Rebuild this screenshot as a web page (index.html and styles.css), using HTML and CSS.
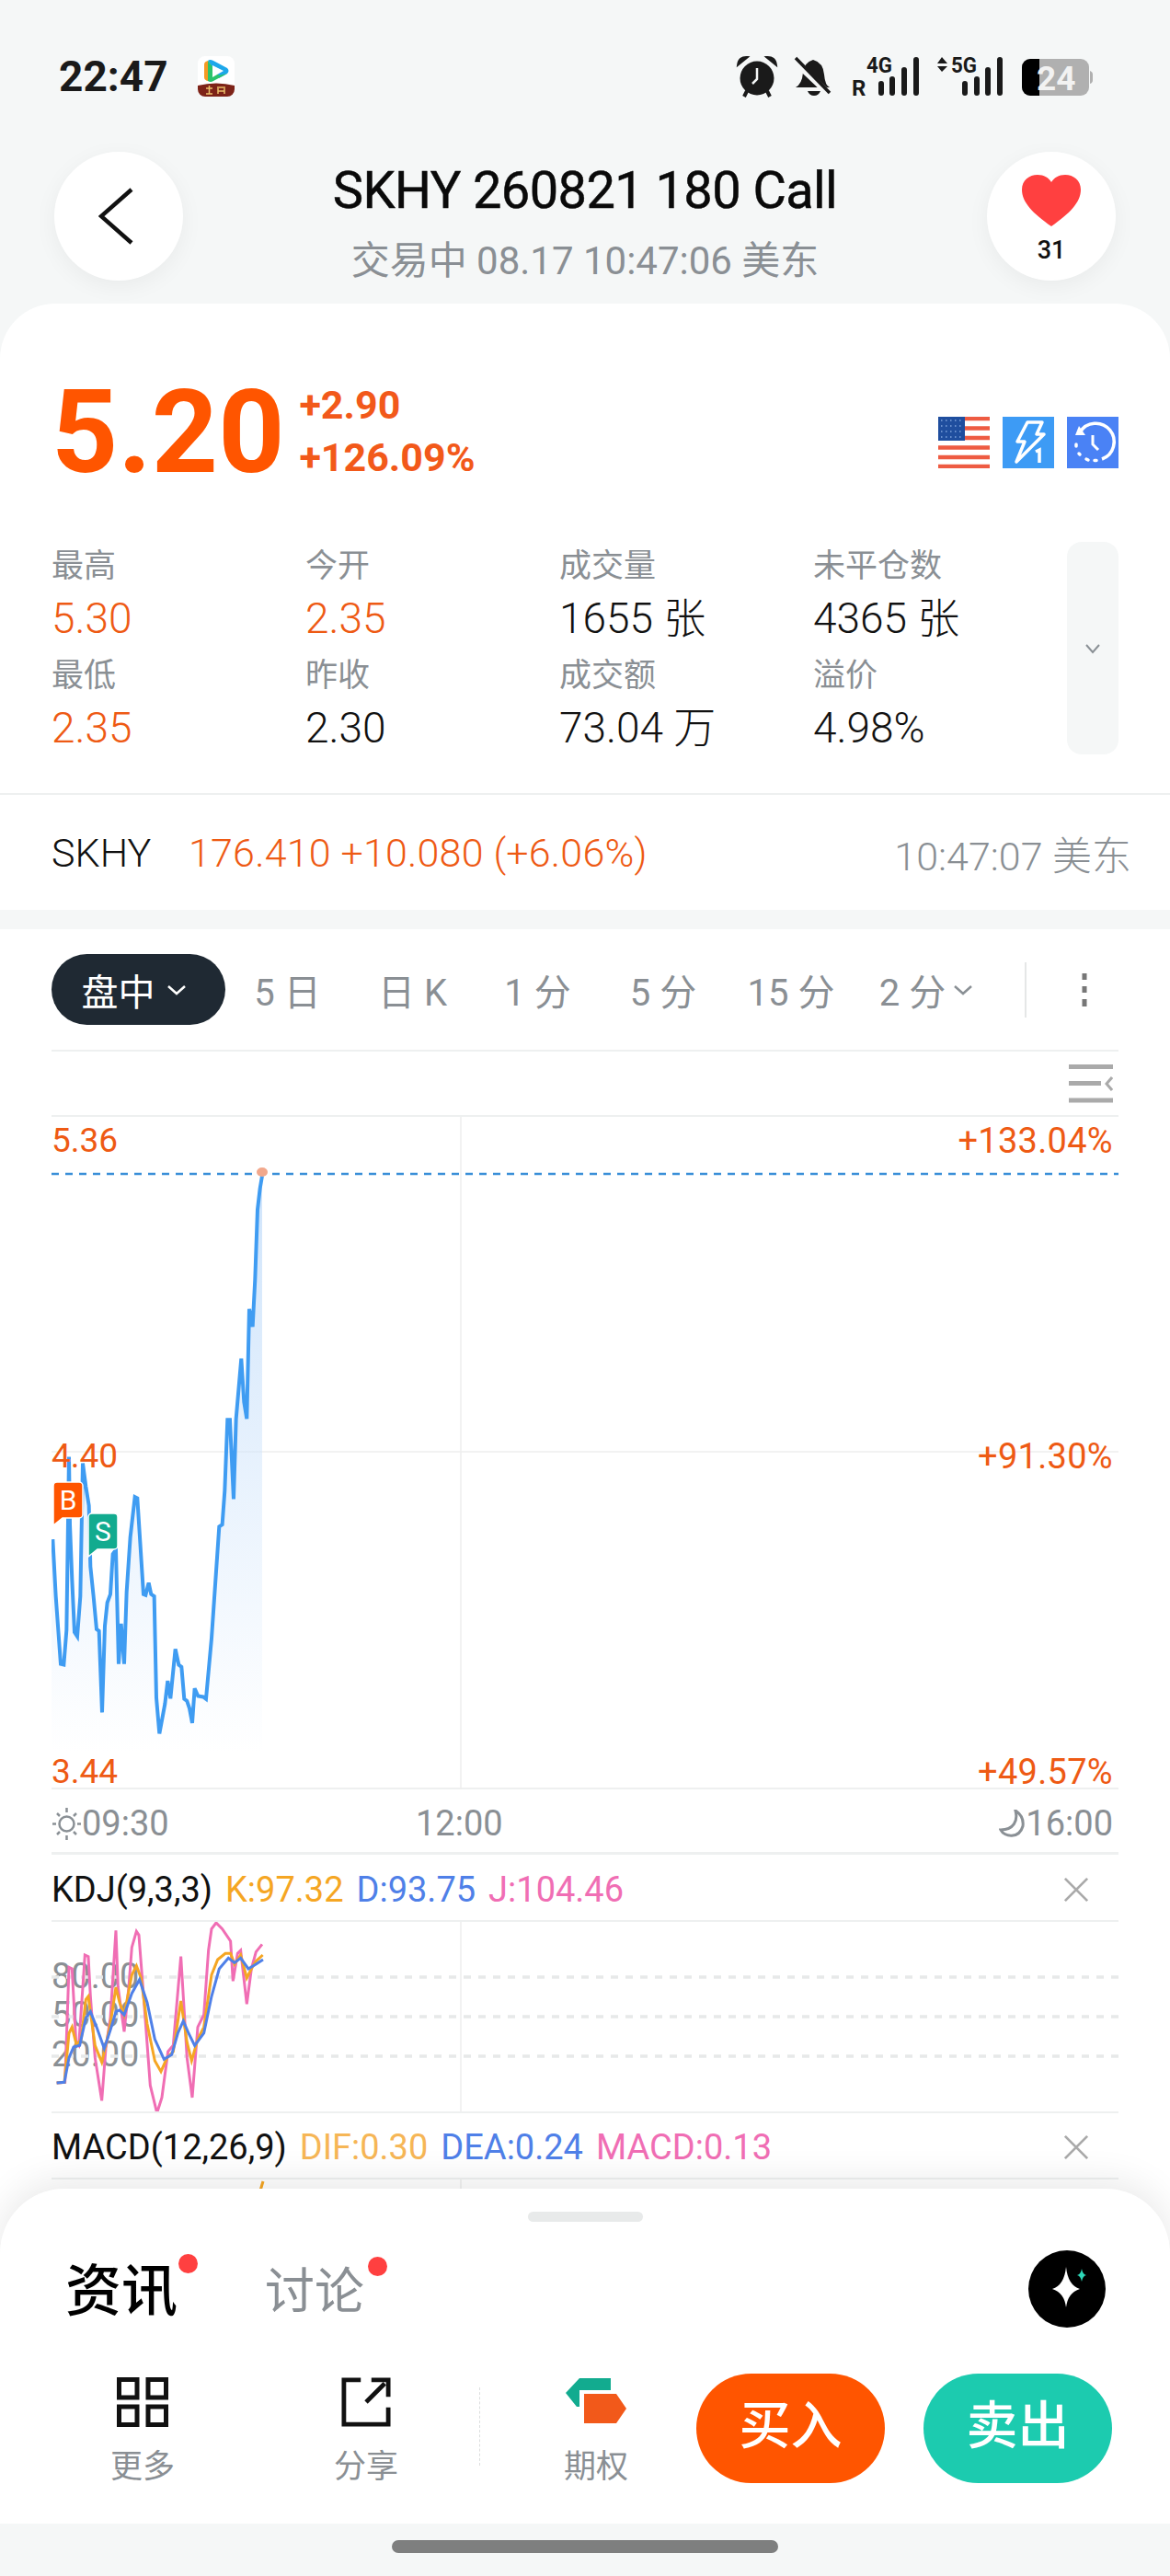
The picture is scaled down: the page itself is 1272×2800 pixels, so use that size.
FILE: index.html
```html
<!DOCTYPE html>
<html lang="zh-CN">
<head>
  <meta charset="UTF-8"/>
  <meta name="viewport" content="width=device-width,initial-scale=1"/>
  <title>SKHY 260821 180 Call</title>
  <link rel="stylesheet" href="styles.css">
</head>
<body>
<div id="page">

  <div class="status">
    <span class="clock">22:47</span>
    <svg class="app-icon" viewBox="0 0 42 46">
      <rect x="1" y="1" width="40" height="44" rx="8" fill="#fff"/>
      <path d="M12 6 Q8 7 8 10 V24 Q8 27 12 28 Z" fill="#f59a23"/>
      <path d="M12 6 Q14 4 18 6 L33 14 Q36 17 33 20 L24 25 Z" fill="#1ea7ea"/>
      <path d="M12 6 V28 Q15 30 18 28 L33 20 L24 22 L12 6 Z" fill="#2bc46b"/>
      <path d="M17 11 L29 17 L17 24 Z" fill="#fff"/>
      <path d="M1 33 Q21 28 41 33 V37 a8 8 0 0 1 -8 8 H9 a8 8 0 0 1 -8 -8 Z" fill="#7d2318"/>
      <path d="M10 36 H17 M13.500 33 V42 M10 42 H17 M22 35 H31 M23 42 V36 M30 42 V36 M23 39 H30" stroke="#ecc06a" stroke-width="1.500"/>
    </svg>
    <svg class="status-icons" viewBox="790 50 410 64">
      <!-- alarm -->
      <circle cx="823" cy="84" r="18.500" fill="#1a1a1a"/>
      <path d="M802 70 Q803 60 813 61 Z M844 70 Q843 60 833 61 Z" fill="#1a1a1a" stroke="#1a1a1a" stroke-width="2"/>
      <path d="M809 104 L812 98 M837 104 L834 98" stroke="#1a1a1a" stroke-width="4"/>
      <path d="M823 73 V85 L818 90" fill="none" stroke="#f5f7f7" stroke-width="2.500"/>
      <!-- muted bell -->
      <path d="M865 94 Q872 90 873 78 Q874 67 884 64 Q895 67 896 80 Q897 92 902 94 Z" fill="#1a1a1a"/>
      <path d="M878 98 H892 Q890 103 885 103 Q880 103 878 98 Z" fill="#1a1a1a"/>
      <path d="M860 62 L900 100" stroke="#f5f7f7" stroke-width="7"/>
      <path d="M865 62 L902 100" stroke="#1a1a1a" stroke-width="3.500"/>
      <!-- 4G -->
      <text class="net" x="926" y="103" font-size="24">R</text>
      <text class="net" x="942" y="78" font-size="23" textLength="28" lengthAdjust="spacingAndGlyphs">4G</text>
      <path d="M958 90 V100 M970 85 V100 M983 75 V100 M996 64 V100" stroke="#1a1a1a" stroke-width="6" stroke-linecap="round"/>
      <!-- 5G -->
      <path d="M1019 68 L1024 61 L1030 68 Z M1019 71 L1024 77 L1030 71 Z" fill="#1a1a1a"/>
      <text class="net" x="1034" y="78" font-size="23" textLength="28" lengthAdjust="spacingAndGlyphs">5G</text>
      <path d="M1049 90 V100 M1062 85 V100 M1074 75 V100 M1087 64 V100" stroke="#1a1a1a" stroke-width="6" stroke-linecap="round"/>
      <!-- battery -->
      <rect x="1111" y="63" width="73" height="40" rx="9" fill="#b0b0b0"/>
      <path d="M1120 63 H1130 V103 H1120 a9 9 0 0 1 -9 -9 V72 a9 9 0 0 1 9 -9 Z" fill="#000"/>
      <path d="M1185 76 q3 1 3 4 v6 q0 3 -3 4 Z" fill="#b0b0b0"/>
      <text class="net batt" x="1127" y="97" font-size="37">24</text>
    </svg>
  </div>

  <div class="topbar">
    <div class="round-btn">
      <svg class="back" viewBox="0 0 38 62"><path d="M36 2 L3 31 L36 60" fill="none" stroke="#111" stroke-width="4.500"/></svg>
    </div>
    <div class="title-box">
      <div class="title">SKHY 260821 180 Call</div>
      <div class="subtitle">交易中 08.17 10:47:06 美东</div>
    </div>
    <div class="round-btn fav">
      <svg class="heart" viewBox="0 0 64 56"><path d="M32 56 C12 42 0 30 0 16 C0 6 8 0 17 0 C24 0 29 3 32 8 C35 3 40 0 47 0 C56 0 64 6 64 16 C64 30 52 42 32 56 Z" fill="#ff4040"/></svg>
      <span class="fav-count">31</span>
    </div>
  </div>

  <div class="quote">
    <div class="quote-head">
      <div class="price">5.20</div>
      <div class="change">
        <div>+2.90</div>
        <div>+126.09%</div>
      </div>
      <div class="badges">
        <svg viewBox="0 0 56 56">
          <rect width="56" height="56" fill="#fff"/>
          <path d="M0 2 H56 M0 12.500 H56 M0 23 H56 M0 33.500 H56 M0 44 H56 M0 54 H56" stroke="#ee5b42" stroke-width="4.500"/>
          <rect width="29" height="26" fill="#1f4e9e"/>
          <path d="M3 4 H27 M3 10 H27 M3 16 H27 M3 22 H27" stroke="#7fa4dd" stroke-width="1.500" stroke-dasharray="1.500 3.500"/>
        </svg>
        <svg viewBox="0 0 56 56">
          <rect width="56" height="56" fill="#3d9bf5"/>
          <path d="M27 6 H43 L37 19 H45 L15 49 L24 27 H16 Z" fill="none" stroke="#fff" stroke-width="3.500" stroke-linejoin="round"/>
          <path d="M36 38 L40 36 V50" fill="none" stroke="#fff" stroke-width="3.500"/>
        </svg>
        <svg viewBox="0 0 56 56">
          <rect width="56" height="56" fill="#4a82f5"/>
          <path d="M14 17 A20 20 0 1 1 38 46" fill="none" stroke="#fff" stroke-width="3.500"/>
          <path d="M9 20 L20 20 L13 10 Z" fill="#fff"/>
          <path d="M28 20 V30 L34 36" fill="none" stroke="#fff" stroke-width="3"/>
          <path d="M10 30 V32 M13 40 L14 41 M21 46 L23 47 M30 47.500 L32 47.500" stroke="#fff" stroke-width="3.500" stroke-linecap="round"/>
        </svg>
      </div>
    </div>

    <div class="stats">
      <div class="stat-grid">
        <div class="stat"><span class="label">最高</span><span class="up">5.30</span></div>
        <div class="stat"><span class="label">今开</span><span class="up">2.35</span></div>
        <div class="stat"><span class="label">成交量</span><span>1655 张</span></div>
        <div class="stat"><span class="label">未平仓数</span><span>4365 张</span></div>
        <div class="stat"><span class="label">最低</span><span class="up">2.35</span></div>
        <div class="stat"><span class="label">昨收</span><span>2.30</span></div>
        <div class="stat"><span class="label">成交额</span><span>73.04 万</span></div>
        <div class="stat"><span class="label">溢价</span><span>4.98%</span></div>
      </div>
      <div class="expand">
        <svg viewBox="0 0 18 12"><path d="M2 2 L9 10 L16 2" fill="none" stroke="#8a9095" stroke-width="2"/></svg>
      </div>
    </div>

    <div class="underlying">
      <span class="sym">SKHY</span>
      <span class="under-px">176.410 +10.080 (+6.06%)</span>
      <span class="under-time">10:47:07 美东</span>
    </div>
  </div>

  <div class="chart-card">
    <div class="tabs">
      <div class="tab active">盘中<svg viewBox="0 0 22 12"><path d="M2 2 L11 10 L20 2" fill="none" stroke="#fff" stroke-width="2.500"/></svg></div>
      <div class="tab">5 日</div>
      <div class="tab">日 K</div>
      <div class="tab">1 分</div>
      <div class="tab">5 分</div>
      <div class="tab">15 分</div>
      <div class="tab">2 分<svg viewBox="0 0 22 12"><path d="M2 2 L11 10 L20 2" fill="none" stroke="#8a9095" stroke-width="2.500"/></svg></div>
      <div class="tab-sep"></div>
      <svg class="tab-more" viewBox="0 0 8 36"><path d="M4 0 V7 M4 14 V21 M4 28 V36" stroke="#777" stroke-width="5"/></svg>
    </div>

    <div class="chart-tools">
      <svg viewBox="0 0 48 42"><path d="M0 2.500 H48 M0 20.500 H35 M0 39 H48" stroke="#aaa" stroke-width="5"/><path d="M47 14 L41 21 L47 28" fill="none" stroke="#aaa" stroke-width="3"/></svg>
    </div>

    <div class="main-chart">
      <svg viewBox="56 1214 1160 731">
        <defs>
          <linearGradient id="area" x1="0" y1="0" x2="0" y2="1">
            <stop offset="0" stop-color="#cfe4fb"/>
            <stop offset="1" stop-color="#cfe4fb" stop-opacity="0"/>
          </linearGradient>
        </defs>
        <path d="M501 1214 V1945" stroke="#eee" stroke-width="1.500"/>
        <path d="M56 1578 H1216" stroke="#eee" stroke-width="1.500"/>
        <g transform="translate(20 1230) scale(.3333 .4592)">
          <polygon fill="url(#area)" points="112,965 122,1100 138,1260 148,1262 157,1180 165,770 168,930 175,1060 183,1185 192,1195 202,1100 210,785 220,840 230,885 235,1030 245,1100 255,1178 263,1182 273,1375 282,1170 290,1115 300,1095 308,1000 318,990 327,1260 335,1165 345,1260 353,1090 365,960 380,865 388,868 408,1095 415,1097 425,1068 433,1095 443,1100 450,1340 460,1425 478,1355 487,1300 496,1342 512,1225 523,1262 532,1267 541,1343 550,1348 558,1365 567,1400 575,1318 586,1336 603,1338 612,1343 630,1200 655,935 665,930 673,850 682,682 690,682 702,870 710,680 727,537 736,640 745,680 753,420 764,462 772,350 780,185 788,135 795,105 795,1470 108,1470 108,965"/>
          <polyline fill="none" stroke="#3f9cf2" stroke-width="4" vector-effect="non-scaling-stroke" points="112,965 122,1100 138,1260 148,1262 157,1180 165,770 168,930 175,1060 183,1185 192,1195 202,1100 210,785 220,840 230,885 235,1030 245,1100 255,1178 263,1182 273,1375 282,1170 290,1115 300,1095 308,1000 318,990 327,1260 335,1165 345,1260 353,1090 365,960 380,865 388,868 408,1095 415,1097 425,1068 433,1095 443,1100 450,1340 460,1425 478,1355 487,1300 496,1342 512,1225 523,1262 532,1267 541,1343 550,1348 558,1365 567,1400 575,1318 586,1336 603,1338 612,1343 630,1200 655,935 665,930 673,850 682,682 690,682 702,870 710,680 727,537 736,640 745,680 753,420 764,462 772,350 780,185 788,135 795,105"/>
        </g>
        <path d="M56 1276 H1216" stroke="#3a8fd8" stroke-width="2.500" stroke-dasharray="8 7"/>
        <ellipse cx="285" cy="1274" rx="6" ry="5" fill="#f2a88c"/>
        <path d="M62 1611 H86 a4 4 0 0 1 4 4 V1646 a4 4 0 0 1 -4 4 H68 L58 1658 V1615 a4 4 0 0 1 4 -4 Z" fill="#ff5500" stroke="#fff" stroke-width="1.500"/>
        <text class="flag-text" x="74" y="1641">B</text>
        <path d="M100 1645 H124 a4 4 0 0 1 4 4 V1680 a4 4 0 0 1 -4 4 H106 L96 1692 V1649 a4 4 0 0 1 4 -4 Z" fill="#12ab8f" stroke="#fff" stroke-width="1.500"/>
        <text class="flag-text" x="112" y="1675">S</text>
      </svg>
      <span class="axis-l l1">5.36</span>
      <span class="axis-l l2">4.40</span>
      <span class="axis-l l3">3.44</span>
      <span class="axis-r l1">+133.04%</span>
      <span class="axis-r l2">+91.30%</span>
      <span class="axis-r l3">+49.57%</span>
    </div>

    <div class="time-axis">
      <span class="t-start">
        <svg viewBox="0 0 31 35"><circle cx="15.500" cy="17.500" r="8" fill="none" stroke="#8a9095" stroke-width="2.500"/><path d="M15.500 0 V5 M15.500 30 V35 M0 17.500 H4 M27 17.500 H31 M5 6 L8 9 M26 6 L23 9 M5 29 L8 26 M26 29 L23 26" stroke="#8a9095" stroke-width="2.500"/></svg>09:30
      </span>
      <span class="t-mid">12:00</span>
      <span class="t-end">
        <svg viewBox="0 0 28 30"><path d="M18 1 C21 12 16 22 2 22 C6 30 22 32 26 18 C27 11 24 5 18 1 Z" fill="none" stroke="#8a9095" stroke-width="3"/></svg>16:00
      </span>
    </div>

    <div class="ind-head">
      <span class="ind-name">KDJ(9,3,3)</span>
      <span class="c-k">K:97.32</span>
      <span class="c-d">D:93.75</span>
      <span class="c-j">J:104.46</span>
      <svg class="ind-close" viewBox="0 0 30 30"><path d="M2 2 L28 28 M28 2 L2 28" stroke="#aaa" stroke-width="3"/></svg>
    </div>

    <div class="kdj-chart">
      <span class="kdj-l k80">80.00</span>
      <span class="kdj-l k50">50.00</span>
      <span class="kdj-l k20">20.00</span>
      <svg viewBox="56 2089 1160 206">
        <path d="M501 2089 V2295" stroke="#eee" stroke-width="1.500"/>
        <path d="M56 2149 H1216 M56 2192 H1216 M56 2235 H1216" stroke="#e7e9e9" stroke-width="3.500" stroke-dasharray="8 8"/>
        <g transform="translate(40 2060) scale(.3333)" fill="none" stroke-width="9">
          <polyline stroke="#f06eb4" points="65,612 92,610 105,235 115,240 128,480 137,490 150,300 157,195 168,200 175,330 190,530 212,670 225,500 240,400 258,115 265,300 285,445 300,300 310,170 325,118 333,130 350,350 370,620 392,710 408,660 428,510 445,490 470,200 490,530 507,660 525,430 545,390 560,180 570,110 585,90 605,110 632,150 640,280 655,190 665,180 685,355 700,240 715,185 735,160"/>
          <polyline stroke="#f5a623" points="65,612 90,610 105,450 115,430 130,490 145,470 160,340 168,330 190,490 212,545 225,490 240,420 258,300 270,350 285,390 310,260 325,230 340,270 360,420 385,540 405,575 425,530 445,510 470,345 490,480 505,540 525,470 545,430 570,260 590,210 615,190 632,190 645,225 665,195 685,270 700,240 715,215 737,195"/>
          <polyline stroke="#4f80e8" points="65,612 90,610 105,530 120,495 140,490 160,400 175,380 195,430 220,500 240,440 258,380 270,375 285,390 310,320 335,275 360,350 385,470 415,535 440,520 460,450 478,410 495,450 515,490 545,450 570,330 595,240 625,205 645,220 665,205 690,240 715,225 738,210"/>
        </g>
      </svg>
    </div>

    <div class="ind-head macd">
      <span class="ind-name">MACD(12,26,9)</span>
      <span class="c-k soft">DIF:0.30</span>
      <span class="c-d">DEA:0.24</span>
      <span class="c-j">MACD:0.13</span>
      <svg class="ind-close" viewBox="0 0 30 30"><path d="M2 2 L28 28 M28 2 L2 28" stroke="#aaa" stroke-width="3"/></svg>
    </div>

    <div class="macd-chart">
      <svg viewBox="56 2369 1160 20">
        <path d="M501 2369 V2389" stroke="#eee" stroke-width="1.500"/>
        <path d="M286 2371 L283 2381" stroke="#f5a623" stroke-width="3"/>
      </svg>
    </div>
  </div>

  <!-- bottom sheet sits over the chart -->
  <div class="sheet">
    <div class="handle"></div>
    <div class="news-tabs">
      <span class="news-tab on">资讯<i class="dot"></i></span>
      <span class="news-tab">讨论<i class="dot"></i></span>
      <div class="ai-btn">
        <svg viewBox="0 0 84 84">
          <circle cx="42" cy="42" r="42" fill="#000"/>
          <path d="M41 18 Q43 38 56 42 Q43 46 41 62 Q39 46 26 42 Q39 38 41 18 Z" fill="#fff"/>
          <path d="M58 20 Q59 26 63 27 Q59 28 58 34 Q57 28 53 27 Q57 26 58 20 Z" fill="#2ed8b8"/>
        </svg>
      </div>
    </div>
    <div class="actions">
      <div class="tool">
        <svg viewBox="0 0 56 54"><path d="M2.500 2.500 H22 V22 H2.500 Z M34 2.500 H53.500 V22 H34 Z M2.500 32 H22 V51.500 H2.500 Z M34 32 H53.500 V51.500 H34 Z" fill="none" stroke="#111" stroke-width="5"/></svg>
        <span>更多</span>
      </div>
      <div class="tool">
        <svg viewBox="0 0 56 56"><path d="M22 3 H3 V53 H53 V34" fill="none" stroke="#111" stroke-width="5"/><path d="M28 28 L49 7" stroke="#111" stroke-width="5"/><path d="M34 3 H53 V22" fill="none" stroke="#111" stroke-width="5"/></svg>
        <span>分享</span>
      </div>
      <div class="tool-sep"></div>
      <div class="tool">
        <svg viewBox="0 0 68 52"><path d="M16 1 H50 V14 H16 V32 H13 L1 17 Z" fill="#12ab8f"/><path d="M21 18 H56 L67 34 L56 50 H21 Z" fill="#f2591a"/></svg>
        <span>期权</span>
      </div>
      <div class="trade buy">买入</div>
      <div class="trade sell">卖出</div>
    </div>
    <div class="home"><div class="home-pill"></div></div>
  </div>

</div>
</body>
</html>
```

FILE: styles.css
```css
html, body { margin:0; padding:0; background:#f5f7f7; }
body { font-family:Roboto, "Noto Sans CJK SC", sans-serif; color:#111; }
#page { position:relative; width:1272px; height:2800px; overflow:hidden; }
svg { display:block; }

/* status bar */
.status { height:165px; display:flex; align-items:center; padding-left:64px; box-sizing:border-box; }
.clock { font-size:46px; font-weight:700; color:#1a1a1a; width:150px; }
.app-icon { width:42px; height:46px; }
.status-icons { width:410px; height:64px; margin-left:auto; margin-right:72px; }
.net { font-family:Roboto, sans-serif; font-weight:700; fill:#1a1a1a; }
.batt { fill:#f2f2f2; }

/* top bar */
.topbar { height:165px; display:flex; justify-content:space-between; padding:0 59px 0 59px; }
.round-btn {
  width:140px; height:140px; border-radius:50%; background:#fff;
  box-shadow:0 6px 24px rgba(0,0,0,0.05);
  display:flex; flex-direction:column; align-items:center; justify-content:center;
}
.back { width:38px; height:62px; margin-right:6px; }
.fav { justify-content:flex-start; padding-top:25px; box-sizing:border-box; }
.heart { width:64px; height:56px; }
.fav-count { font-size:27px; font-weight:500; margin-top:11px; line-height:30px; }
.title-box { text-align:center; padding-top:11px; }
.title { font-size:56px; font-weight:400; line-height:62px; letter-spacing:-0.6px; color:#0a0a0a; -webkit-text-stroke:0.5px #0a0a0a; }
.subtitle { font-size:42px; line-height:52px; margin-top:20px; color:#8a8f94; }

/* quote card */
.quote { background:#fff; border-radius:60px 60px 0 0; height:659px; }
.quote-head { height:257px; box-sizing:border-box; padding:76px 56px 0 56px; display:flex; align-items:flex-start; }
.price { font-size:126px; font-weight:700; line-height:128px; color:#ff5500; }
.change { margin:6px 0 0 16px; font-size:43px; font-weight:700; line-height:57px; color:#f2591a; }
.badges { margin:47px 0 0 auto; display:flex; gap:14px; }
.badges svg { width:56px; height:56px; }

.stats { display:flex; padding:0 56px; height:275px; box-sizing:border-box; }
.stat-grid { flex:1; display:grid; grid-template-columns:276px 276px 276px 1fr; grid-auto-rows:119px; height:233px; }
.stat { display:flex; flex-direction:column; font-size:46px; font-weight:300; line-height:57px; }
.label { font-size:35px; font-weight:400; color:#8a8f94; }
.stat .up { color:#ee5a14; }
.expand { width:56px; height:231px; margin-top:2px; background:#f5f7f7; border-radius:16px; display:flex; align-items:center; justify-content:center; }
.expand svg { width:18px; height:12px; }

.underlying { height:127px; border-top:2px solid #eef0f0; box-sizing:border-box; display:flex; align-items:center; padding:0 42px 0 56px; font-size:43px; font-weight:300; }
.sym { width:149px; }
.under-px { color:#ee5a14; letter-spacing:0.2px; }
.under-time { margin-left:auto; color:#8a8f94; }

/* chart */
.chart-card { background:#fff; margin-top:21px; padding:0 56px; height:1790px; }
.tabs {
  height:133px; border-bottom:2px solid #eef0f0; box-sizing:border-box;
  display:grid; grid-template-columns:189px 135px 137px 135px 138px 140px 154px 32px 1fr;
  align-items:center; font-size:40px; color:#8a8f94;
}
.tab { display:flex; align-items:center; justify-content:center; gap:8px; }
.tab svg { width:22px; height:12px; }
.tab.active { height:77px; background:#1f2933; color:#fff; border-radius:39px; gap:12px; padding-right:10px; box-sizing:border-box; }
.tab-sep { width:2px; height:60px; background:#e5e7e7; justify-self:end; }
.tab-more { width:8px; height:36px; margin-left:59px; }
.chart-tools { height:71px; border-bottom:2px solid #eef0f0; box-sizing:border-box; display:flex; justify-content:flex-end; align-items:center; padding-right:6px; }
.chart-tools svg { width:48px; height:42px; }

.main-chart { position:relative; height:731px; border-bottom:2px solid #eef0f0; box-sizing:border-box; }
.main-chart svg { width:1160px; height:731px; }
.flag-text { font-family:Roboto, sans-serif; font-size:30px; fill:#fff; text-anchor:middle; }
.axis-l, .axis-r { position:absolute; font-size:37px; line-height:44px; color:#ee5a14; }
.axis-l { left:0; }
.axis-r { right:6px; font-size:38px; letter-spacing:0.3px; }
.l1 { top:4px; }
.l2 { top:347px; }
.l3 { top:690px; }

.time-axis { height:71px; border-bottom:3px solid #eef0f0; box-sizing:border-box; padding-top:6px; display:flex; align-items:center; position:relative; font-size:38px; color:#8a8f94; }
.t-start, .t-end { display:flex; align-items:center; gap:1px; }
.t-start svg { width:31px; height:35px; margin-left:1px; }
.t-end { margin-left:auto; padding-right:6px; }
.t-end svg { width:28px; height:30px; }
.t-mid { position:absolute; left:396px; }

.ind-head { height:73px; border-bottom:2px solid #eef0f0; box-sizing:border-box; padding-top:4px; display:flex; align-items:center; gap:14px; font-size:38px; }
.ind-head.macd { height:74px; border-top:2px solid #eef0f0; }
.ind-close { width:28px; height:28px; margin-left:auto; margin-right:32px; }
.c-k { color:#f5a623; }
.c-k.soft { color:#f6b656; }
.c-d { color:#4f80e8; }
.c-j { color:#f06eb4; }

.kdj-chart { position:relative; height:206px; }
.kdj-chart svg { position:relative; width:1160px; height:206px; }
.kdj-l { position:absolute; left:0; font-size:38px; line-height:44px; color:#8a8f94; }
.k80 { top:37px; }
.k50 { top:79px; }
.k20 { top:122px; }
.macd-chart svg { width:1160px; height:20px; }

/* bottom sheet */
.sheet {
  position:absolute; left:0; right:0; bottom:0; height:421px;
  background:#fff; border-radius:70px 70px 0 0;
  box-shadow:0 -8px 40px rgba(0,0,0,0.09);
}
.handle { width:125px; height:11px; border-radius:6px; background:#e8eaea; margin:25px auto 0; }
.news-tabs { display:flex; align-items:center; height:84px; margin-top:31px; padding:0 70px 0 71px; }
.news-tab { position:relative; font-size:54px; color:#8a8f94; margin-right:95px; top:-2px; }
.news-tab.on { font-size:61px; font-weight:500; color:#000; top:-3px; }
.dot { position:absolute; width:21px; height:21px; border-radius:50%; background:#ff4040; right:-25px; top:6px; }
.on .dot { top:9px; right:-22px; }
.ai-btn { margin-left:auto; }
.ai-btn svg { width:84px; height:84px; }

.actions { display:flex; align-items:flex-start; margin-top:50px; padding-left:75px; height:163px; }
.tool { width:160px; display:flex; flex-direction:column; align-items:center; font-size:35px; color:#8a8f94; padding-top:4px; }
.tool svg { width:56px; height:54px; }
.tool:nth-of-type(2) { margin-left:83px; }
.tool:nth-of-type(4) svg { width:68px; height:52px; }
.tool span { margin-top:22px; line-height:44px; }
.tool:nth-of-type(4) span { margin-top:24px; }
.tool-sep { width:0; height:85px; margin:15px 46px 0 43px; border-left:1px dashed #dcdede; }
.trade { width:205px; height:119px; border-radius:60px; color:#fff; font-size:56px; font-weight:500; line-height:114px; display:flex; align-items:flex-start; justify-content:center; }
.buy { background:#ff5500; margin-left:29px; }
.sell { background:#1ccbaf; margin-left:42px; }

.home { background:#f5f7f7; height:57px; padding-top:18px; box-sizing:border-box; }
.home-pill { width:420px; height:14px; border-radius:7px; background:#7e7f7f; margin:0 auto; }
```
